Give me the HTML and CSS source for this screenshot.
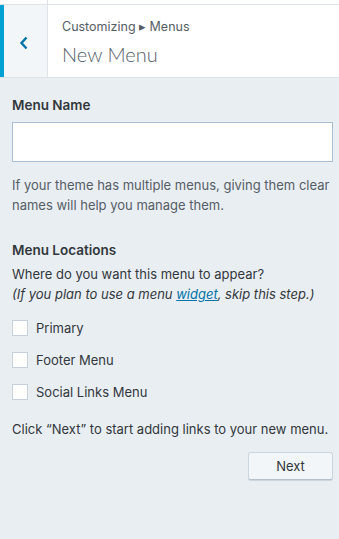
FILE: index.html
```html
<!DOCTYPE html>
<html lang="en">
<head>
  <meta charset="UTF-8">
  <title>New Menu</title>
  <link rel="stylesheet" href="styles.css">
</head>
<body>
  <div class="top-strip"><span class="strip-back"></span></div>
  <div class="section-head">
    <button class="back" aria-label="Back">
      <svg width="10" height="14" viewBox="0 0 10 14"><path d="M7.5 1.5 L2.5 7 L7.5 12.5" fill="none" stroke="#0073aa" stroke-width="2.4"/></svg>
    </button>
    <div class="titles">
      <span class="crumb">Customizing &#9656; Menus</span>
      <h2 class="title">New Menu</h2>
    </div>
  </div>

  <div class="panel">
    <label class="field-label" for="menu-name">Menu Name</label>
    <input type="text" id="menu-name" class="menu-name">
    <p class="help">If your theme has multiple menus, giving them clear names will help you manage them.</p>

    <h3 class="field-label locations">Menu Locations</h3>
    <p class="desc">Where do you want this menu to appear?<br>
      <em>(If you plan to use a menu <a href="#">widget</a>, skip this step.)</em></p>

    <ul class="locs">
      <li><label><span class="box"></span>Primary</label></li>
      <li><label><span class="box"></span>Footer Menu</label></li>
      <li><label><span class="box"></span>Social Links Menu</label></li>
    </ul>

    <p class="desc next-note">Click &ldquo;Next&rdquo; to start adding links to your new menu.</p>
    <div class="actions">
      <button class="btn-next">Next</button>
    </div>
  </div>
</body>
</html>
```

FILE: styles.css
```css
body{
  margin:0;
  background:#e9eef3;
  font-family:"Inter","Liberation Sans",sans-serif;
  color:#32373c;
  height:539px;
}
.top-strip{
  height:4px;
  background:#fff;
  border-bottom:1px solid #dde3e9;
}
.strip-back{
  display:block;
  width:47px;
  height:4px;
  border-right:1px solid #dde3e9;
}
.section-head{
  display:flex;
  height:72px;
  background:#fff;
  border-bottom:1px solid #dde3e9;
}
.back{
  width:48px;
  border:0;
  border-left:4px solid #00a0d2;
  border-right:1px solid #dde3e9;
  background:#f3f6f8;
  padding:0;
  margin:0;
  display:flex;
  align-items:center;
  justify-content:center;
}
.back svg{
  margin-right:3px;
  margin-top:3px;
}
.titles{
  padding:13px 0 0 14px;
  color:#555d66;
}
.crumb{
  display:block;
  font-size:12.5px;
  line-height:18px;
}
.title{
  margin:5px 0 0;
  font-family:"Lato","Inter",sans-serif;
  font-size:20px;
  font-weight:300;
  line-height:26px;
  color:#555d66;
}
.panel{
  padding:17px 6px 0 12px;
}
.field-label{
  display:block;
  margin:0;
  font-size:13.5px;
  font-weight:600;
  line-height:20px;
  color:#32373c;
}
.menu-name{
  display:block;
  box-sizing:border-box;
  width:321px;
  height:40px;
  margin:7px 0 0;
  border:1px solid #a9bfd3;
  border-radius:0;
  background:#fff;
}
.help{
  margin:13px 0 0;
  font-size:13px;
  line-height:20px;
  color:#555d66;
}
.locations{
  margin-top:25px;
}
.desc{
  margin:4px 0 0;
  font-size:13px;
  line-height:20px;
  color:#32373c;
}
.desc a{
  color:#0073aa;
}
.locs{
  list-style:none;
  margin:15px 0 0;
  padding:0;
}
.locs li{
  height:32px;
}
.locs label{
  display:flex;
  align-items:center;
  font-size:13px;
  line-height:18px;
  color:#32373c;
}
.box{
  width:14px;
  height:14px;
  border:1px solid #c6d1db;
  background:#fff;
  margin-right:8px;
}
.next-note{
  margin-top:4px;
}
.actions{
  display:flex;
  justify-content:flex-end;
  margin-top:13px;
}
.btn-next{
  width:85px;
  height:28px;
  border:1px solid #ccd6df;
  border-bottom-color:#b3c1cd;
  border-radius:3px;
  background:#f3f6f8;
  box-shadow:0 1px 0 #ccd6df;
  font-family:inherit;
  font-size:13px;
  color:#32373c;
}
```
